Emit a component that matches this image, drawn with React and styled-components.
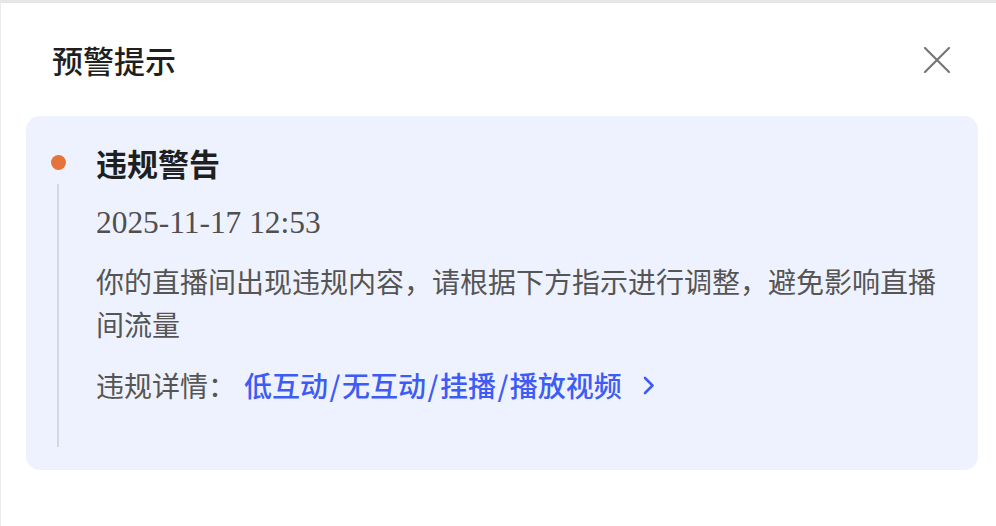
import React from "react";
import styled, { createGlobalStyle } from "styled-components";

const Global = createGlobalStyle`
  html, body { margin: 0; padding: 0; background: #ffffff; }
  body { font-family: "Noto Sans CJK SC", "Noto Sans", sans-serif; }
  * { box-sizing: border-box; }
`;

const Panel = styled.div`
  width: 996px;
  height: 526px;
  background: #ffffff;
  border-top: 3px solid #e6e6e6;
  border-left: 1px solid #ececec;
  display: flex;
  flex-direction: column;
`;

const Header = styled.div`
  height: 113px;
  display: flex;
  align-items: center;
  justify-content: space-between;
  padding: 0 46px 0 51px;
`;

const Title = styled.h1`
  margin: 0;
  font-size: 31px;
  font-weight: 500;
  color: #1f1f1f;
  line-height: 44px;
`;

const CloseButton = styled.button`
  width: 26px;
  height: 26px;
  padding: 0;
  border: none;
  background: transparent;
  display: flex;
  align-items: center;
  justify-content: center;
  cursor: pointer;
`;

const Card = styled.div`
  margin: 0 18px 0 25px;
  height: 354px;
  border-radius: 14px;
  background: #eef2fe;
  padding: 25px 24px 23px 24px;
  display: grid;
  grid-template-columns: 16px 1fr;
  column-gap: 30px;
`;

const Marker = styled.div`
  display: flex;
  flex-direction: column;
  align-items: center;
`;

const Dot = styled.span`
  width: 15px;
  height: 15px;
  border-radius: 50%;
  background: #e5743a;
  margin-top: 14px;
  flex: none;
`;

const Rail = styled.span`
  width: 2px;
  flex: 1;
  margin-top: 14px;
  background: #d4d8e6;
`;

const Content = styled.div`
  display: flex;
  flex-direction: column;
  padding-bottom: 40px;
`;

const ItemTitle = styled.div`
  font-size: 31px;
  font-weight: 600;
  line-height: 44px;
  color: #1f1f1f;
`;

const Time = styled.div`
  margin-top: 18px;
  font-family: "Liberation Serif", "Times New Roman", serif;
  font-size: 31.4px;
  line-height: 40px;
  color: #4f4f4f;
`;

const Body = styled.p`
  margin: 17px 0 0 0;
  font-size: 28px;
  line-height: 43px;
  color: #555555;
`;

const Detail = styled.div`
  margin-top: 18px;
  display: flex;
  align-items: center;
  font-size: 28px;
  line-height: 42px;
`;

const Label = styled.span`
  color: #555555;
`;

const Link = styled.a`
  margin-left: 8px;
  color: #3d5cf5;
  font-weight: 500;
  display: flex;
  align-items: center;
  gap: 21px;
  text-decoration: none;
  cursor: pointer;
`;

const Slash = styled.span`
  margin: 0 1.5px;
`;

export default function App() {
  const parts = ["低互动", "无互动", "挂播", "播放视频"];
  return (
    <>
      <Global />
      <Panel>
        <Header>
          <Title>预警提示</Title>
          <CloseButton aria-label="关闭">
            <svg width="26" height="26" viewBox="0 0 26 26">
              <path d="M1 1 L25 25 M25 1 L1 25" stroke="#777777" strokeWidth="2.2" strokeLinecap="round" fill="none" />
            </svg>
          </CloseButton>
        </Header>
        <Card>
          <Marker>
            <Dot />
            <Rail />
          </Marker>
          <Content>
            <ItemTitle>违规警告</ItemTitle>
            <Time>2025-11-17 12:53</Time>
            <Body>你的直播间出现违规内容，请根据下方指示进行调整，避免影响直播间流量</Body>
            <Detail>
              <Label>违规详情：</Label>
              <Link>
                <span>
                  {parts.map((p, i) => (
                    <React.Fragment key={p}>
                      {i > 0 && <Slash>/</Slash>}
                      {p}
                    </React.Fragment>
                  ))}
                </span>
                <svg width="12" height="19" viewBox="0 0 12 19">
                  <path d="M2 2 L9.5 9.5 L2 17" stroke="#3d5cf5" strokeWidth="2.6" strokeLinecap="round" strokeLinejoin="round" fill="none" />
                </svg>
              </Link>
            </Detail>
          </Content>
        </Card>
      </Panel>
    </>
  );
}
